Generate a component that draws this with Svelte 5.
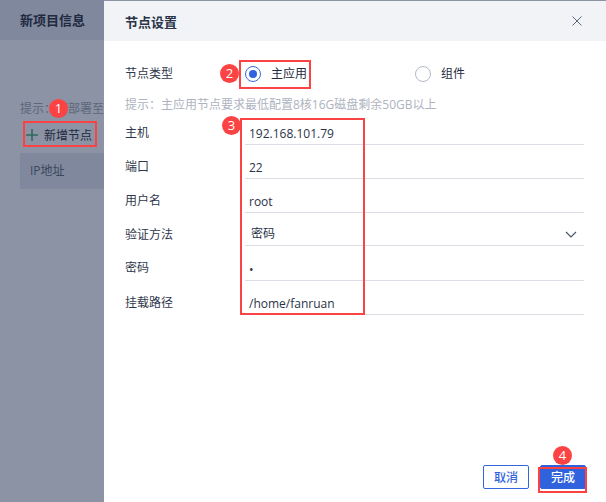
<script>
  const fields = [
    { label: '主机', value: '192.168.101.79', h: 34 },
    { label: '端口', value: '22', h: 34 },
    { label: '用户名', value: 'root', h: 34 },
    { label: '验证方法', value: '密码', h: 33, select: true },
    { label: '密码', value: '•', h: 35, dot: true },
    { label: '挂载路径', value: '/home/fanruan', h: 34 }
  ];
  const badges = [
    { n: 1, x: 49, y: 99 },
    { n: 2, x: 220, y: 64 },
    { n: 3, x: 222, y: 116 },
    { n: 4, x: 553, y: 446 }
  ];
  const boxes = [
    { x: 23, y: 121, w: 74, h: 26 },
    { x: 239, y: 60, w: 72, h: 29 },
    { x: 240, y: 118, w: 125, h: 197 },
    { x: 538, y: 467, w: 49, h: 26 }
  ];
</script>

<div class="page">
  <div class="back">
    <div class="back-head">新项目信息</div>
    <div class="back-hint">提示：请部署至</div>
    <div class="back-add">
      <svg width="14" height="14" viewBox="0 0 14 14"><path d="M7 1v12M1 7h12" stroke="#2f6b5c" stroke-width="1.6" fill="none" /></svg>
      <span>新增节点</span>
    </div>
    <div class="back-th">IP地址</div>
  </div>

  <div class="panel">
    <header>
      <span class="title">节点设置</span>
      <svg class="close" width="10" height="10" viewBox="0 0 10 10"><path d="M.5.5l9 9M9.5.5l-9 9" stroke="#5c667a" stroke-width="1" fill="none" /></svg>
    </header>
    <div class="body">
      <div class="type-row">
        <span class="label">节点类型</span>
        <div class="radio-main"><span class="radio on"></span><span>主应用</span></div>
        <div class="radio-sub"><span class="radio"></span><span>组件</span></div>
      </div>
      <div class="hint">提示：主应用节点要求最低配置8核16G磁盘剩余50GB以上</div>
      <div class="fields">
        {#each fields as f}
          <div class="field" style:height="{f.h}px">
            <span class="label">{f.label}</span>
            <div class="input" class:sel={f.select} class:dot={f.dot}>
              <span>{f.value}</span>
              {#if f.select}
                <svg width="12" height="7" viewBox="0 0 12 7"><path d="M1 1l5 5 5-5" stroke="#4a556b" stroke-width="1.2" fill="none" /></svg>
              {/if}
            </div>
          </div>
        {/each}
      </div>
    </div>
    <footer>
      <button class="cancel">取消</button>
      <button class="ok">完成</button>
    </footer>
  </div>

  {#each boxes as b}
    <div class="box" style:left="{b.x}px" style:top="{b.y}px" style:width="{b.w}px" style:height="{b.h}px"></div>
  {/each}
  {#each badges as b}
    <div class="badge" style:left="{b.x}px" style:top="{b.y}px">{b.n}</div>
  {/each}
</div>

<style>
  :global(body) { margin: 0; }
  .page {
    position: relative;
    width: 606px;
    height: 502px;
    overflow: hidden;
    background: #8b93a5;
    font-family: "Open Sans", "Noto Sans CJK SC", sans-serif;
    font-size: 12px;
    color: #232b3f;
    display: flex;
  }
  .back { width: 104px; flex: none; }
  .back-head {
    height: 40px;
    line-height: 40px;
    padding-left: 20px;
    background: #7f889c;
    font-size: 13px;
    font-weight: 700;
    color: #1f2a40;
    white-space: nowrap;
  }
  .back-hint {
    margin-top: 61px;
    padding-left: 20px;
    height: 16px;
    line-height: 16px;
    color: #5e6679;
    white-space: nowrap;
    overflow: hidden;
  }
  .back-add {
    margin-top: 5px;
    padding-left: 25px;
    display: flex;
    align-items: center;
    gap: 5px;
    height: 26px;
    font-size: 12px;
    color: #1f2a40;
    white-space: nowrap;
  }
  .back-th {
    margin: 5px 0 0 20px;
    height: 36px;
    line-height: 36px;
    padding-left: 10px;
    background: #7f889c;
    color: #3c465c;
  }
  .panel {
    margin-top: 1px;
    flex: 1;
    display: flex;
    flex-direction: column;
    background: #fff;
    min-width: 0;
  }
  header {
    height: 40px;
    flex: none;
    background: #f1f3f7;
    display: flex;
    align-items: center;
    justify-content: space-between;
    padding: 0 24px 0 21px;
  }
  .title { font-size: 13px; font-weight: 700; color: #2a3347; }
  .body { flex: 1; padding: 0 22px 0 21px; }
  .type-row { display: flex; align-items: center; height: 30px; margin-top: 17px; }
  .label { width: 120px; flex: none; color: #2f384c; }
  .radio-main, .radio-sub { display: flex; align-items: center; gap: 10px; }
  .radio-main { width: 170px; }
  .radio {
    width: 16px;
    height: 16px;
    box-sizing: border-box;
    border-radius: 50%;
    border: 1px solid #b3b9c7;
    display: inline-block;
    position: relative;
    top: 1px;
  }
  .radio.on { border-color: #3b6bd8; }
  .radio.on::after {
    content: "";
    position: absolute;
    inset: 3px;
    background: #2f62dc;
    border-radius: 50%;
  }
  .hint { margin-top: 8px; height: 18px; line-height: 18px; color: #aeb3c0; font-size: 12px; white-space: nowrap; }
  .fields { margin-top: -3px; }
  .field { display: flex; align-items: flex-end; }
  .field .label { align-self: flex-start; padding-top: 14px; line-height: 16px; }
  .input {
    flex: 1;
    height: 100%;
    box-sizing: border-box;
    border-bottom: 1px solid #dcdee7;
    display: flex;
    align-items: flex-end;
    justify-content: space-between;
    padding: 0 7px 2px 4px;
    font-size: 12px;
    line-height: 16px;
    color: #2a3347;
  }
  .input.sel { align-items: center; padding: 10px 7px 0 6px; }
  footer {
    flex: none;
    height: 27px;
    padding: 0 20px 10px 0;
    display: flex;
    justify-content: flex-end;
    gap: 11px;
  }
  button {
    height: 24px;
    width: 46px;
    padding: 0;
    box-sizing: border-box;
    border-radius: 2px;
    font-family: inherit;
    font-size: 12px;
    font-weight: 500;
  }
  .cancel { background: #fff; border: 1px solid #3366dd; color: #3366dd; }
  .ok { background: #2f62dc; border: 1px solid #2f62dc; color: #fff; }
  .box {
    position: absolute;
    box-sizing: border-box;
    border: 2px solid #fb4343;
  }
  .badge {
    position: absolute;
    width: 19px;
    height: 19px;
    border-radius: 50%;
    background: #fb4343;
    color: #fff;
    font-family: "Open Sans", sans-serif;
    font-size: 13px;
    line-height: 19px;
    text-align: center;
  }
</style>
